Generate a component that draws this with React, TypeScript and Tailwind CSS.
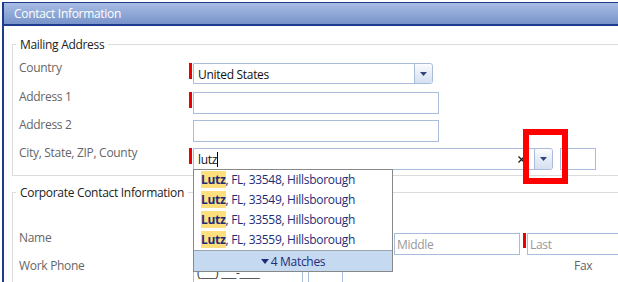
import type { ReactNode } from 'react';

const zips = ['33548', '33549', '33558', '33559'];

function Caret() {
    return (
        <svg width="7" height="4" viewBox="0 0 7 4">
            <polygon points="0,0 7,0 3.5,4" fill="#34437a" />
        </svg>
    );
}

function DropButton() {
    return (
        <div className="w-[18px] h-full border-l border-[#a9bcdb] rounded-r-[3px] bg-[linear-gradient(to_bottom,#fbfcfe,#e4ebf6_55%,#d6e0f1)] flex items-center justify-center">
            <Caret />
        </div>
    );
}

function Row({ label, required, children, className = '' }: { label: string; required?: boolean; children: ReactNode; className?: string }) {
    return (
        <div className={`flex items-start ${className}`}>
            <div className="w-[170px] -mt-[4px] leading-[17px] text-[#666]">{label}</div>
            <div className={`w-[3px] h-[16px] ${required ? 'bg-[#ee0000]' : ''}`} />
            <div className="ml-[1px] flex items-start">{children}</div>
        </div>
    );
}

export default function App() {
    return (
        <div className="relative w-[618px] h-[282px] overflow-hidden bg-white font-['Open_Sans',sans-serif] text-[12px] tracking-[-0.3px] text-[#111]">
            <div className="ml-[2px] mt-[2px] h-[300px] border-l-2 border-[#1e3c8e]">
                {/* Header */}
                <div className="h-[24px] border-t border-b-2 border-[#1e3c8e] bg-[linear-gradient(to_bottom,#a9bde3,#8fa8d7_50%,#7993cb)] pl-[10px] flex items-center text-white">
                    Contact Information
                </div>

                <div className="pl-[8px]">
                    {/* Mailing Address */}
                    <fieldset className="mt-[10px] w-[640px] border border-[#dcdcdc] pb-[5px]">
                        <legend className="ml-[3px] px-[4px] leading-[17px] text-[#222]">Mailing Address</legend>
                        <div className="pl-[6px] pt-[10px] flex flex-col">
                            <Row label="Country" required>
                                <div className="w-[240px] h-[21px] border border-[#a9bcdb] rounded-r-[3px] flex">
                                    <div className="flex-1 pl-[4px] pt-[2px] leading-[17px]">United States</div>
                                    <DropButton />
                                </div>
                            </Row>
                            <Row label="Address 1" required className="mt-[8px]">
                                <div className="w-[246px] h-[22px] border border-[#a9bcdb]" />
                            </Row>
                            <Row label="Address 2" className="mt-[6px]">
                                <div className="w-[246px] h-[22px] border border-[#a9bcdb]" />
                            </Row>
                            <Row label="City, State, ZIP, County" required className="mt-[6px]">
                                <div className="w-[360px] h-[22px] border border-[#a9bcdb] rounded-r-[3px] flex items-stretch">
                                    <div className="flex-1 pl-[4px] pt-[2px] leading-[17px] flex items-start">
                                        lutz
                                        <span className="w-px h-[15px] mt-[1px] bg-black" />
                                    </div>
                                    <div className="mr-[9px] flex items-center">
                                        <svg width="7" height="7" viewBox="0 0 7 7">
                                            <path d="M0.5 0.5L6.5 6.5M6.5 0.5L0.5 6.5" stroke="#1a1a1a" strokeWidth="1.3" />
                                        </svg>
                                    </div>
                                    <DropButton />
                                </div>
                                <div className="ml-[7px] w-[36px] h-[22px] border border-[#a9bcdb]" />
                            </Row>
                        </div>
                    </fieldset>

                    {/* Corporate Contact Information */}
                    <fieldset className="mt-[8px] w-[640px] border border-[#dcdcdc]">
                        <legend className="ml-[3px] px-[4px] leading-[17px] text-[#222]">Corporate Contact Information</legend>
                        <div className="pl-[6px] pt-[32px] flex flex-col">
                            <Row label="Name">
                                <div className="w-[198px] h-[22px] border border-[#a9bcdb]" />
                                <div className="ml-[3px] w-[126px] h-[22px] border border-[#a9bcdb] pl-[2px] pt-[2px] leading-[17px] text-[#999]">Middle</div>
                                <div className="ml-[3px] w-[3px] h-[15px] bg-[#ee0000]" />
                                <div className="ml-[1px] w-[120px] h-[22px] border border-[#a9bcdb] pl-[2px] pt-[2px] leading-[17px] text-[#999]">Last</div>
                            </Row>
                            <Row label="Work Phone" className="mt-[6px]">
                                <div className="w-[110px] h-[22px] border border-[#a9bcdb] pl-[3px] pt-[2px] leading-[17px] text-[#333]">(___) ___-____</div>
                                <div className="ml-[5px] w-[35px] h-[22px] border border-[#a9bcdb]" />
                                <div className="ml-[231px] -mt-[4px] leading-[17px] text-[#666]">Fax</div>
                            </Row>
                        </div>
                    </fieldset>
                </div>
            </div>

            {/* Autocomplete popup */}
            <div className="absolute left-[193px] top-[169px] w-[200px] h-[103px] border border-[#888] bg-white flex flex-col text-[#1e2d78]">
                {zips.map(zip => (
                    <div key={zip} className="h-[20px] leading-[20px] pl-[7px] whitespace-nowrap">
                        <span className="bg-[#fddf7e] font-bold">Lutz</span>, FL, {zip}, Hillsborough
                    </div>
                ))}
                <div className="flex-1 border-t border-[#9aa3b0] bg-[#c5d9f0] flex items-center justify-center gap-[2px]">
                    <svg width="8" height="5" viewBox="0 0 8 5">
                        <polygon points="0,0 8,0 4,5" fill="#1e2d78" />
                    </svg>
                    <span className="leading-[17px]">4 Matches</span>
                </div>
            </div>

            {/* Highlight box */}
            <div className="absolute left-[523px] top-[129px] w-[45px] h-[55px] border-[6px] border-[#ff0000]" />
        </div>
    );
}
